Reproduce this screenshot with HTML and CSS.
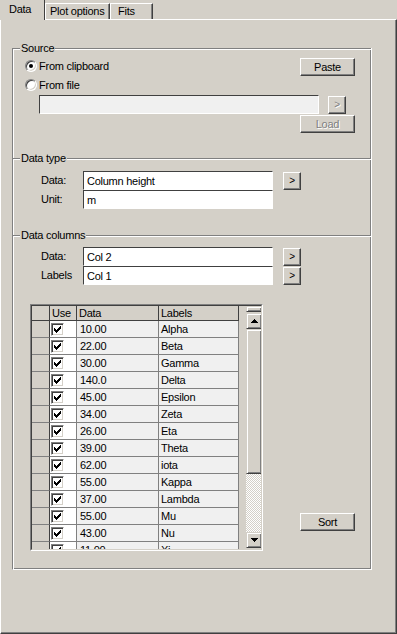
FILE: index.html
```html
<!DOCTYPE html>
<html>

<head>
    <title>Data</title>
    <link rel="stylesheet" href="styles.css">
</head>

<body>
    <div class="tabs">
        <div class="tab active">Data</div>
        <div class="tab plot">Plot options</div>
        <div class="tab fits">Fits</div>
    </div>
    <div class="panel">
        <div class="frame">
            <div class="section source">
                <div class="legend">Source</div>
                <div class="row row-clip">
                    <div class="option"><span class="radio checked"></span>From clipboard</div>
                    <button class="btn wide push-right">Paste</button>
                </div>
                <div class="row row-file">
                    <div class="option"><span class="radio"></span>From file</div>
                </div>
                <div class="row row-path">
                    <input class="field path" type="text" disabled>
                    <button class="btn small" disabled>&gt;</button>
                </div>
                <div class="row row-load">
                    <button class="btn wide push-right" disabled>Load</button>
                </div>
            </div>
            <div class="section type">
                <div class="legend">Data type</div>
                <div class="row line first">
                    <span class="caption">Data:</span>
                    <input class="field" type="text" value="Column height">
                    <button class="btn small">&gt;</button>
                </div>
                <div class="row line">
                    <span class="caption">Unit:</span>
                    <input class="field" type="text" value="m">
                </div>
            </div>
            <div class="section columns">
                <div class="legend">Data columns</div>
                <div class="row line first">
                    <span class="caption">Data:</span>
                    <input class="field" type="text" value="Col 2">
                    <button class="btn small">&gt;</button>
                </div>
                <div class="row line">
                    <span class="caption">Labels</span>
                    <input class="field" type="text" value="Col 1">
                    <button class="btn small">&gt;</button>
                </div>
                <div class="row row-grid">
                    <div class="grid">
                        <div class="grid-inner">
                            <div class="cells">
                                <div class="grow head">
                                    <div class="rh"></div>
                                    <div class="c-use">Use</div>
                                    <div class="c-data">Data</div>
                                    <div class="c-label">Labels</div>
                                </div>
                                <div class="grow"><div class="rh"></div><div class="c-use"><span class="check"><svg width="7" height="7" viewBox="0 0 7 7"><path d="M0 2h1v3H0zM1 3h1v3H1zM2 4h1v3H2zM3 3h1v3H3zM4 2h1v3H4zM5 1h1v3H5zM6 0h1v3H6z"/></svg></span></div><div class="c-data">10.00</div><div class="c-label">Alpha</div></div>
                                <div class="grow"><div class="rh"></div><div class="c-use"><span class="check"><svg width="7" height="7" viewBox="0 0 7 7"><path d="M0 2h1v3H0zM1 3h1v3H1zM2 4h1v3H2zM3 3h1v3H3zM4 2h1v3H4zM5 1h1v3H5zM6 0h1v3H6z"/></svg></span></div><div class="c-data">22.00</div><div class="c-label">Beta</div></div>
                                <div class="grow"><div class="rh"></div><div class="c-use"><span class="check"><svg width="7" height="7" viewBox="0 0 7 7"><path d="M0 2h1v3H0zM1 3h1v3H1zM2 4h1v3H2zM3 3h1v3H3zM4 2h1v3H4zM5 1h1v3H5zM6 0h1v3H6z"/></svg></span></div><div class="c-data">30.00</div><div class="c-label">Gamma</div></div>
                                <div class="grow"><div class="rh"></div><div class="c-use"><span class="check"><svg width="7" height="7" viewBox="0 0 7 7"><path d="M0 2h1v3H0zM1 3h1v3H1zM2 4h1v3H2zM3 3h1v3H3zM4 2h1v3H4zM5 1h1v3H5zM6 0h1v3H6z"/></svg></span></div><div class="c-data">140.0</div><div class="c-label">Delta</div></div>
                                <div class="grow"><div class="rh"></div><div class="c-use"><span class="check"><svg width="7" height="7" viewBox="0 0 7 7"><path d="M0 2h1v3H0zM1 3h1v3H1zM2 4h1v3H2zM3 3h1v3H3zM4 2h1v3H4zM5 1h1v3H5zM6 0h1v3H6z"/></svg></span></div><div class="c-data">45.00</div><div class="c-label">Epsilon</div></div>
                                <div class="grow"><div class="rh"></div><div class="c-use"><span class="check"><svg width="7" height="7" viewBox="0 0 7 7"><path d="M0 2h1v3H0zM1 3h1v3H1zM2 4h1v3H2zM3 3h1v3H3zM4 2h1v3H4zM5 1h1v3H5zM6 0h1v3H6z"/></svg></span></div><div class="c-data">34.00</div><div class="c-label">Zeta</div></div>
                                <div class="grow"><div class="rh"></div><div class="c-use"><span class="check"><svg width="7" height="7" viewBox="0 0 7 7"><path d="M0 2h1v3H0zM1 3h1v3H1zM2 4h1v3H2zM3 3h1v3H3zM4 2h1v3H4zM5 1h1v3H5zM6 0h1v3H6z"/></svg></span></div><div class="c-data">26.00</div><div class="c-label">Eta</div></div>
                                <div class="grow"><div class="rh"></div><div class="c-use"><span class="check"><svg width="7" height="7" viewBox="0 0 7 7"><path d="M0 2h1v3H0zM1 3h1v3H1zM2 4h1v3H2zM3 3h1v3H3zM4 2h1v3H4zM5 1h1v3H5zM6 0h1v3H6z"/></svg></span></div><div class="c-data">39.00</div><div class="c-label">Theta</div></div>
                                <div class="grow"><div class="rh"></div><div class="c-use"><span class="check"><svg width="7" height="7" viewBox="0 0 7 7"><path d="M0 2h1v3H0zM1 3h1v3H1zM2 4h1v3H2zM3 3h1v3H3zM4 2h1v3H4zM5 1h1v3H5zM6 0h1v3H6z"/></svg></span></div><div class="c-data">62.00</div><div class="c-label">iota</div></div>
                                <div class="grow"><div class="rh"></div><div class="c-use"><span class="check"><svg width="7" height="7" viewBox="0 0 7 7"><path d="M0 2h1v3H0zM1 3h1v3H1zM2 4h1v3H2zM3 3h1v3H3zM4 2h1v3H4zM5 1h1v3H5zM6 0h1v3H6z"/></svg></span></div><div class="c-data">55.00</div><div class="c-label">Kappa</div></div>
                                <div class="grow"><div class="rh"></div><div class="c-use"><span class="check"><svg width="7" height="7" viewBox="0 0 7 7"><path d="M0 2h1v3H0zM1 3h1v3H1zM2 4h1v3H2zM3 3h1v3H3zM4 2h1v3H4zM5 1h1v3H5zM6 0h1v3H6z"/></svg></span></div><div class="c-data">37.00</div><div class="c-label">Lambda</div></div>
                                <div class="grow"><div class="rh"></div><div class="c-use"><span class="check"><svg width="7" height="7" viewBox="0 0 7 7"><path d="M0 2h1v3H0zM1 3h1v3H1zM2 4h1v3H2zM3 3h1v3H3zM4 2h1v3H4zM5 1h1v3H5zM6 0h1v3H6z"/></svg></span></div><div class="c-data">55.00</div><div class="c-label">Mu</div></div>
                                <div class="grow"><div class="rh"></div><div class="c-use"><span class="check"><svg width="7" height="7" viewBox="0 0 7 7"><path d="M0 2h1v3H0zM1 3h1v3H1zM2 4h1v3H2zM3 3h1v3H3zM4 2h1v3H4zM5 1h1v3H5zM6 0h1v3H6z"/></svg></span></div><div class="c-data">43.00</div><div class="c-label">Nu</div></div>
                                <div class="grow"><div class="rh"></div><div class="c-use"><span class="check"><svg width="7" height="7" viewBox="0 0 7 7"><path d="M0 2h1v3H0zM1 3h1v3H1zM2 4h1v3H2zM3 3h1v3H3zM4 2h1v3H4zM5 1h1v3H5zM6 0h1v3H6z"/></svg></span></div><div class="c-data">11.00</div><div class="c-label">Xi</div></div>
                            </div>
                            <div class="gutter"></div>
                            <div class="scroll">
                                <div class="sb-cap"></div>
                                <div class="sb-btn up"><svg width="7" height="4" viewBox="0 0 7 4"><path d="M3 0h1v1h1v1h1v1h1v1H0V3h1V2h1V1h1z"/></svg></div>
                                <div class="sb-thumb"></div>
                                <div class="sb-track"></div>
                                <div class="sb-btn down"><svg width="7" height="4" viewBox="0 0 7 4"><path d="M0 0h7v1H6v1H5v1H4v1H3V3H2V2H1V1H0z"/></svg></div>
                            </div>
                        </div>
                    </div>
                    <button class="btn wide sort">Sort</button>
                </div>
            </div>
        </div>
    </div>
</body>
</html>
```

FILE: styles.css
```css
html {
    background-color: #d4d0c8;
}

body {
    width: 397px;
    height: 634px;
    margin: 0;
    overflow: hidden;
    font-family: 'Liberation Sans', Arial, sans-serif;
    font-size: 11px;
    letter-spacing: -0.25px;
    color: #000;
    background-color: #d4d0c8;
}

/* tab strip */
.tabs {
    position: relative;
    z-index: 1;
    display: flex;
    height: 19px;
}

.tab {
    box-sizing: border-box;
    height: 16px;
    margin-top: 3px;
    padding: 1px 0 0 4px;
    line-height: 13px;
    white-space: nowrap;
    background-color: #d4d0c8;
    border-top: 1px solid #fff;
    border-left: 1px solid #fff;
    border-right: 1px solid #404040;
    box-shadow: inset -1px 0 #808080;
}

.tab.active {
    width: 45px;
    height: 20px;
    margin-top: 0;
    padding: 3px 0 0 9px;
    border-top: none;
    border-left: none;
    box-shadow: none;
}

.tab.plot {
    width: 65px;
}

.tab.fits {
    width: 43px;
    padding-left: 7px;
}

.panel {
    box-sizing: border-box;
    height: 615px;
    padding: 28px 0 0 11px;
    border-top: 1px solid #fff;
    border-left: 1px solid #fff;
    border-right: 1px solid #404040;
    border-bottom: 1px solid #404040;
    box-shadow: inset -1px -1px #808080;
}

/* etched group box */
.frame {
    box-sizing: border-box;
    width: 360px;
    border-left: 1px solid #808080;
    border-right: 1px solid #fff;
    border-bottom: 1px solid #fff;
    box-shadow: inset 1px 0 #fff, inset -1px 0 #808080, inset 0 -1px #808080;
}

.section {
    box-sizing: border-box;
    border-top: 1px solid #808080;
    box-shadow: inset 0 1px #fff;
}

.source {
    height: 110px;
}

.type {
    height: 77px;
}

.columns {
    height: 334px;
}

.legend {
    width: fit-content;
    margin: -7px 0 0 7px;
    padding: 0 1px;
    line-height: 13px;
    background-color: #d4d0c8;
}

.row {
    display: flex;
    align-items: flex-start;
}

.row-clip {
    height: 18px;
    margin-top: 3px;
}

.row-clip .option {
    margin-top: 2px;
}

.row-file {
    height: 16px;
    margin-top: 1px;
}

.row-file .option {
    margin-top: 2px;
}

.row-path {
    margin-top: 2px;
    padding-left: 26px;
}

.row-load {
    margin-top: 1px;
}

.option {
    display: flex;
    align-items: center;
    height: 12px;
    margin-left: 12px;
    line-height: 12px;
    white-space: nowrap;
}

.radio {
    position: relative;
    box-sizing: border-box;
    width: 12px;
    height: 12px;
    margin-right: 2px;
    background-color: #fff;
    border: 1px solid;
    border-color: #808080 #fff #fff #808080;
    border-radius: 50%;
    box-shadow: inset 1px 1px #404040, inset -1px -1px #d4d0c8;
}

.radio.checked::after {
    content: "";
    position: absolute;
    left: 3px;
    top: 3px;
    width: 4px;
    height: 4px;
    border-radius: 50%;
    background-color: #000;
}

.btn {
    box-sizing: border-box;
    height: 18px;
    padding: 0;
    font-family: inherit;
    font-size: 11px;
    letter-spacing: inherit;
    line-height: 14px;
    color: #000;
    background-color: #d4d0c8;
    border: 1px solid;
    border-color: #fff #404040 #404040 #fff;
    box-shadow: inset -1px -1px #808080;
}

.btn:disabled {
    color: #808080;
    text-shadow: 1px 1px #fff;
}

.btn.wide {
    width: 55px;
}

.btn.small {
    width: 18px;
    margin: 1px 0 0 10px;
    font-size: 10px;
}

.push-right {
    margin-left: auto;
    margin-right: 16px;
}

.field {
    box-sizing: border-box;
    width: 190px;
    height: 19px;
    margin: 0;
    padding: 0 3px;
    font-family: inherit;
    font-size: 11px;
    letter-spacing: inherit;
    color: #000;
    background-color: #fff;
    border: 1px solid;
    border-color: #404040 #fff #fff #404040;
    outline: none;
}

.field.path {
    width: 280px;
    background-color: #f0f0f0;
}

.row-path .btn.small {
    margin-left: 9px;
}

.line {
    height: 19px;
    padding-left: 28px;
}

.line.first {
    margin-top: 6px;
}

.columns .line.first {
    margin-top: 5px;
}

.caption {
    width: 42px;
    line-height: 19px;
}

/* data grid */
.row-grid {
    margin: 19px 0 0 17px;
}

.grid {
    width: 233px;
    height: 247px;
    box-sizing: border-box;
    border: 1px solid;
    border-color: #808080 #fff #fff #808080;
}

.grid-inner {
    display: flex;
    height: 100%;
    box-sizing: border-box;
    border: 1px solid;
    border-color: #404040 #d4d0c8 #d4d0c8 #404040;
    overflow: hidden;
}

.cells {
    width: 207px;
    flex: none;
}

.grow {
    display: flex;
    height: 17px;
    box-sizing: border-box;
    line-height: 16px;
    white-space: nowrap;
}

.grow > div {
    box-sizing: border-box;
    border-right: 1px solid #808080;
    border-bottom: 1px solid #808080;
}

.grow .rh {
    width: 18px;
    background-color: #d4d0c8;
    border-right-color: #404040;
}

.c-use {
    width: 27px;
    padding: 2px 0 0 1px;
    background-color: #fff;
}

.c-data {
    width: 82px;
    padding-left: 3px;
    background-color: #f0f0f0;
}

.c-label {
    width: 80px;
    padding-left: 2px;
    background-color: #f0f0f0;
}

.grow.head {
    height: 15px;
    line-height: 14px;
}

.grow.head > div {
    padding: 0 0 0 2px;
    background-color: #d4d0c8;
    border-color: #404040;
}

.check {
    display: block;
    box-sizing: border-box;
    width: 13px;
    height: 13px;
    padding: 2px;
    background-color: #fff;
    border: 1px solid;
    border-color: #808080 #fff #fff #808080;
    box-shadow: inset 1px 1px #404040, inset -1px -1px #d4d0c8;
}

.check svg {
    display: block;
}

.gutter {
    width: 7px;
    flex: none;
    background-color: #d4d0c8;
}

.scroll {
    width: 16px;
    flex: none;
    display: flex;
    flex-direction: column;
}

.sb-cap,
.sb-btn,
.sb-thumb {
    box-sizing: border-box;
    background-color: #d4d0c8;
    border: 1px solid;
    border-color: #d4d0c8 #404040 #404040 #d4d0c8;
    box-shadow: inset 1px 1px #fff, inset -1px -1px #808080;
}

.sb-cap {
    height: 6px;
    margin-bottom: 1px;
}

.sb-btn {
    display: flex;
    align-items: center;
    justify-content: center;
    height: 16px;
}

.sb-btn svg {
    display: block;
}

.sb-thumb {
    height: 145px;
}

.sb-track {
    height: 58px;
    background: repeating-conic-gradient(#fff 0 25%, #d4d0c8 0 50%) 0 0 / 2px 2px;
}

.btn.sort {
    align-self: flex-end;
    margin: 0 0 20px 37px;
}
```
